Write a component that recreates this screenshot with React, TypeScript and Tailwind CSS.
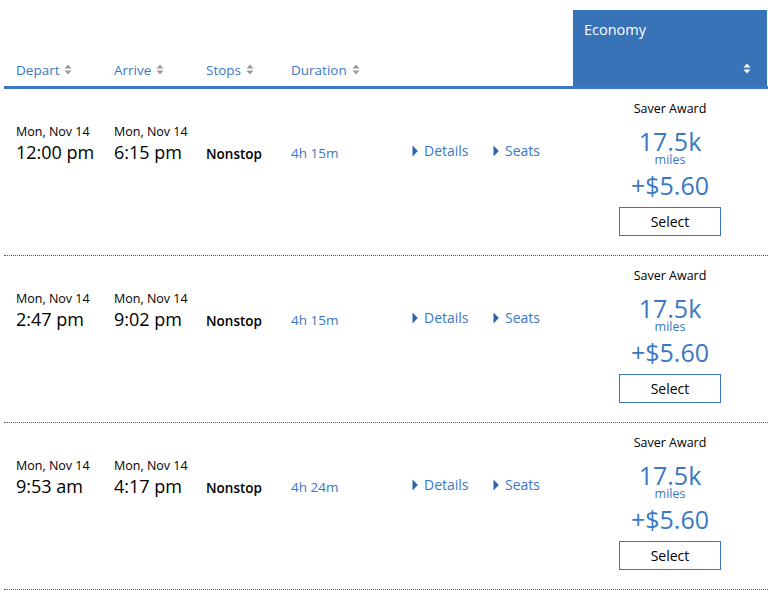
import React from "react";

type Flight = {
  date: string;
  depart: string;
  arrive: string;
  duration: string;
};

const flights: Flight[] = [
  { date: "Mon, Nov 14", depart: "12:00 pm", arrive: "6:15 pm", duration: "4h 15m" },
  { date: "Mon, Nov 14", depart: "2:47 pm", arrive: "9:02 pm", duration: "4h 15m" },
  { date: "Mon, Nov 14", depart: "9:53 am", arrive: "4:17 pm", duration: "4h 24m" },
];

function SortIcon({ color = "#9a9a9a" }: { color?: string }) {
  return (
    <svg width="8" height="11" viewBox="0 0 8 11" className="inline-block ml-[5px]">
      <path d="M4 0.5 L7.5 4.5 L0.5 4.5 Z" fill={color} />
      <path d="M4 10.5 L7.5 6.5 L0.5 6.5 Z" fill={color} />
    </svg>
  );
}

function Caret() {
  return (
    <svg width="6" height="12" viewBox="0 0 6 12" className="inline-block mr-[6px]">
      <path d="M0.5 0.5 L5.8 6 L0.5 11.5 Z" fill="#2f64a8" />
    </svg>
  );
}

function HeaderCell({ label, width }: { label: string; width: string }) {
  return (
    <div className={`${width} flex items-center text-[13.5px] text-[#3b78c4]`}>
      {label}
      <SortIcon />
    </div>
  );
}

function FlightRow({ flight }: { flight: Flight }) {
  return (
    <div className="flex border-b border-dotted border-[#555]">
      <div className="flex flex-1 items-start pl-[12px] pt-[35px]">
        <div className="w-[98px]">
          <div className="text-[12.5px] leading-[16px] text-black">{flight.date}</div>
          <div className="text-[18px] leading-[24px] text-black">{flight.depart}</div>
        </div>
        <div className="w-[92px]">
          <div className="text-[12.5px] leading-[16px] text-black">{flight.date}</div>
          <div className="text-[18px] leading-[24px] text-black">{flight.arrive}</div>
        </div>
        <div className="w-[85px] pt-[20px] text-[13.5px] font-semibold text-black">Nonstop</div>
        <div className="w-[121px] pt-[19px] text-[13.5px] text-[#3b78c4]">{flight.duration}</div>
        <div className="w-[81px] pt-[16px] flex items-center text-[14px] text-[#3b78c4]">
          <Caret />
          Details
        </div>
        <div className="pt-[16px] flex items-center text-[14px] text-[#3b78c4]">
          <Caret />
          Seats
        </div>
      </div>
      <div className="w-[194px] mr-[1px] flex flex-col items-center pt-[12px] pb-[19px]">
        <div className="text-[12.5px] leading-[16px] text-black">Saver Award</div>
        <div className="mt-[11px] text-[25px] leading-[26px] text-[#3b78c4]">17.5k</div>
        <div className="text-[12.5px] leading-[12px] text-[#3b78c4]">miles</div>
        <div className="mt-[3px] text-[25px] leading-[32px] text-[#3b78c4]">+$5.60</div>
        <button className="mt-[6px] w-[102px] h-[29px] border border-[#3b74bd] bg-white text-[14px] text-black">
          Select
        </button>
      </div>
    </div>
  );
}

export default function App() {
  return (
    <div className="w-[768px] bg-white pl-[4px]" style={{ fontFamily: '"Open Sans", "Noto Sans", sans-serif' }}>
      <div className="flex items-end h-[86px]">
        <div className="flex flex-1 pl-[12px] pb-[6px]">
          <HeaderCell label="Depart" width="w-[98px]" />
          <HeaderCell label="Arrive" width="w-[92px]" />
          <HeaderCell label="Stops" width="w-[85px]" />
          <HeaderCell label="Duration" width="w-[121px]" />
        </div>
        <div className="w-[194px] mr-[1px] h-[76px] bg-[#3872b7] flex flex-col justify-between pl-[11px] pr-[16px] pt-[10px] pb-[12px]">
          <div className="text-[14.5px] leading-[20px] text-white">Economy</div>
          <div className="flex justify-end">
            <SortIcon color="#ffffff" />
          </div>
        </div>
      </div>
      <div className="h-[3px] bg-[#3c76c4]" />
      {flights.map((f, i) => (
        <FlightRow key={i} flight={f} />
      ))}
    </div>
  );
}
